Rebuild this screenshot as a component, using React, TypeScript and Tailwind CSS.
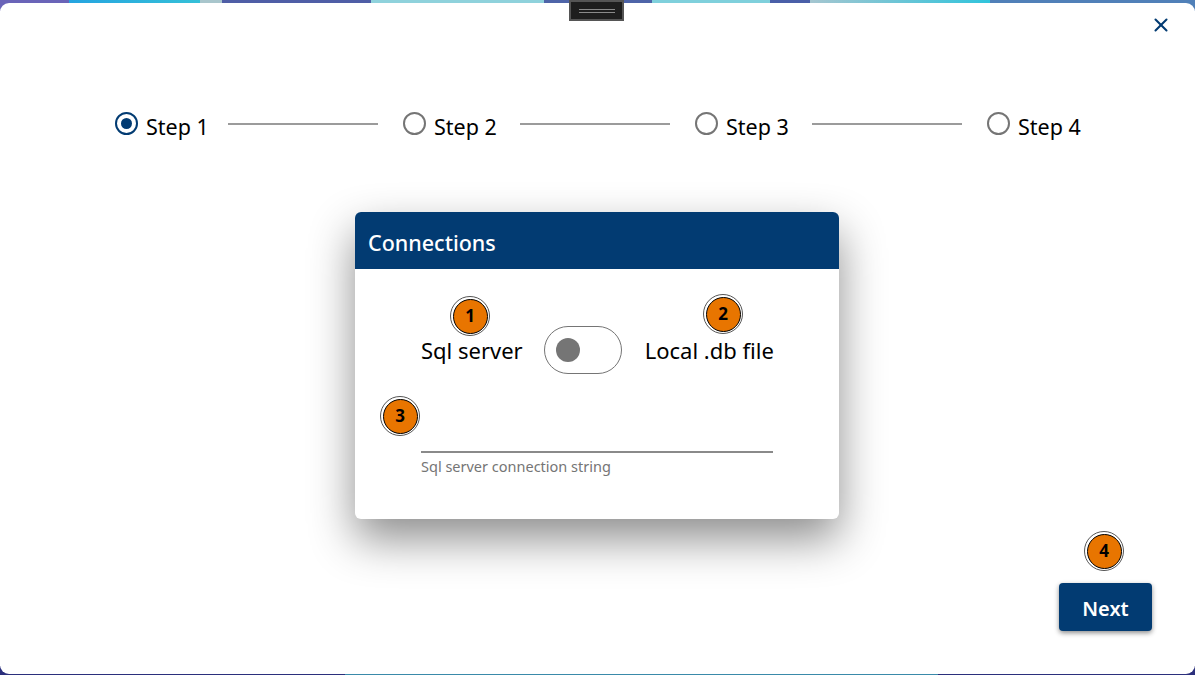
/**
 * Setup wizard, first step: pick the connection type.
 * The thin coloured strips at the top and bottom are the desktop showing
 * round the edge of the window.
 */

import { X } from "lucide-react";

const FONT = "font-['Noto_Sans','Open_Sans',sans-serif]";

function Radio({ active }: { active?: boolean }) {
  if (active) {
    return (
      <span className="flex h-[23px] w-[23px] shrink-0 items-center justify-center rounded-full border-[2.5px] border-[#023b72]">
        <span className="h-[11px] w-[11px] rounded-full bg-[#023b72]" />
      </span>
    );
  }
  return <span className="block h-[23px] w-[23px] shrink-0 rounded-full border-2 border-[#757575]" />;
}

function Step({ label, active }: { label: string; active?: boolean }) {
  return (
    <div className={`flex items-center gap-[8px] ${active ? "w-[90px]" : "w-[94px]"}`}>
      <div className="-mt-[7px]">
        <Radio active={active} />
      </div>
      <span className="whitespace-nowrap text-[21.5px] leading-[28px] text-black">{label}</span>
    </div>
  );
}

function Line() {
  return <div className="-mt-[6px] ml-[23px] mr-[25px] h-[2px] w-[150px] shrink-0 bg-[#9b9b9b]" />;
}

function Badge({ n, className }: { n: number; className: string }) {
  return (
    <div
      className={`absolute flex h-[40px] w-[40px] items-center justify-center rounded-full border border-[#555] bg-white ${className}`}
    >
      <span className="flex h-[35px] w-[35px] items-center justify-center rounded-full border border-black bg-[#e87500] text-[17px] font-bold text-black">
        {n}
      </span>
    </div>
  );
}

export default function App() {
  return (
    <div className={`flex h-[675px] w-[1195px] flex-col overflow-hidden bg-white ${FONT}`}>
      <div className="flex h-[11px] shrink-0">
        <div className="w-[69px] bg-[#6a64b8]" />
        <div className="w-[131px] bg-[linear-gradient(90deg,#25a4e0,#35c0d8)]" />
        <div className="w-[22px] bg-[#a9c6cc]" />
        <div className="w-[149px] bg-[#4f5ea6]" />
        <div className="w-[173px] bg-[#8fd2dc]" />
        <div className="w-[108px] bg-[#4e64a8]" />
        <div className="w-[118px] bg-[#7fd0dc]" />
        <div className="w-[40px] bg-[#4a5fa8]" />
        <div className="w-[180px] bg-[linear-gradient(90deg,#a5c6d0,#30c4dc)]" />
        <div className="flex-1 bg-[#5080b8]" />
      </div>

      <main className="relative z-10 -my-[8px] flex flex-1 flex-col rounded-[9px] bg-white">
        <div className="absolute left-[569px] top-[-3px] flex h-[21px] w-[55px] flex-col items-center justify-center gap-[2px] border-2 border-[#555] bg-[#1e1e1e]">
          <span className="h-[1px] w-[36px] bg-[#8a8a8a]" />
          <span className="h-[1px] w-[36px] bg-[#8a8a8a]" />
        </div>

        <button className="absolute right-[23px] top-[11px] text-[#023b72]">
          <X size={22} strokeWidth={2.25} />
        </button>

        <div className="flex items-center pl-[115px] pt-[110px]">
          <Step label="Step 1" active />
          <Line />
          <Step label="Step 2" />
          <Line />
          <Step label="Step 3" />
          <Line />
          <Step label="Step 4" />
        </div>

        <section className="relative ml-[355px] mt-[71px] h-[307px] w-[484px] rounded-[6px] bg-white shadow-[0_20px_45px_rgba(0,0,0,0.45)]">
          <header className="flex h-[57px] items-center rounded-t-[6px] bg-[#023b72] px-[13px] pt-[5px] text-[21.5px] font-medium text-white">
            Connections
          </header>

          <div className="flex items-center pl-[66px] pt-[57px]">
            <span className="text-[22px] leading-[48px] text-black">Sql server</span>
            <div className="ml-[21px] flex h-[48px] w-[78px] items-center rounded-full border-[1.5px] border-[#757575] pl-[11px]">
              <span className="h-[24px] w-[24px] rounded-full bg-[#757575]" />
            </div>
            <span className="ml-[23px] text-[22px] leading-[48px] text-black">Local .db file</span>
          </div>

          <div className="ml-[66px] mt-[77px] w-[352px] border-t-2 border-[#8a8a8a] pt-[3px] text-[14.5px] leading-[20px] text-[#757575]">
            Sql server connection string
          </div>

          <Badge n={1} className="left-[95px] top-[84px]" />
          <Badge n={2} className="left-[348px] top-[82px]" />
          <Badge n={3} className="left-[25px] top-[184px]" />
        </section>

        <Badge n={4} className="left-[1084px] top-[528px]" />

        <button className="absolute left-[1059px] top-[580px] h-[48px] w-[93px] rounded-[4px] bg-[#023b72] pt-[3px] text-[20px] font-semibold text-white shadow-[0_2px_5px_rgba(0,0,0,0.45)]">
          Next
        </button>
      </main>

      <div className="flex h-[9px] shrink-0">
        <div className="w-[345px] bg-[#2b2f7c]" />
        <div className="w-[593px] bg-[#3a8aaa]" />
        <div className="flex-1 bg-[#2b2f7c]" />
      </div>
    </div>
  );
}
